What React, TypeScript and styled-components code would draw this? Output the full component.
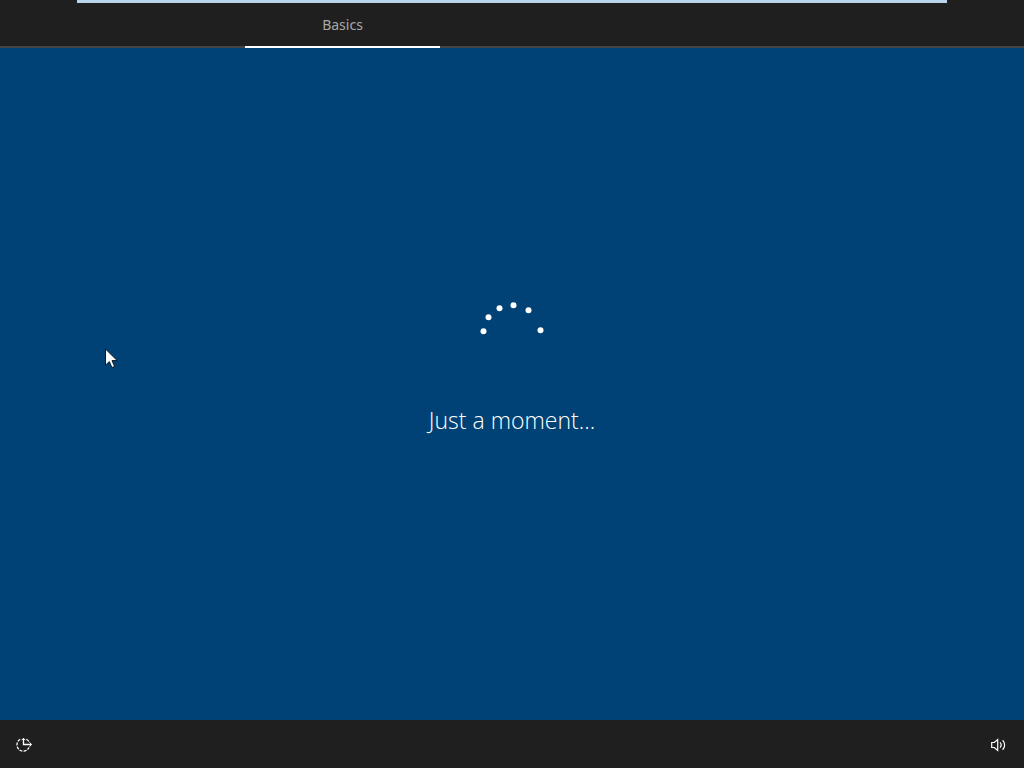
import React from "react";
import styled, { createGlobalStyle } from "styled-components";

const GlobalStyle = createGlobalStyle`
  *, *::before, *::after { box-sizing: border-box; }
  html, body { margin: 0; }
  body {
    background: #004275;
    color: #fff;
    font-family: "Open Sans", "Noto Sans", sans-serif;
    overflow: hidden;
  }
`;

const Screen = styled.div`
  display: flex;
  flex-direction: column;
  min-height: 100vh;
`;

const Header = styled.header`
  display: flex;
  flex-direction: column;
  height: 48px;
  background: #1f1f1f;
`;

const ProgressStrip = styled.div`
  width: 85%;
  height: 3px;
  margin: 0 auto;
  background: #b9d4ea;
`;

const Tabs = styled.nav`
  flex: 1;
  display: grid;
  grid-template-columns: 245fr 195fr 584fr;
  box-shadow: inset 0 -2px #454545;
`;

const Tab = styled.button`
  grid-column: 2;
  padding: 1px 0 0;
  border: 0;
  border-bottom: 2px solid #fff;
  background: transparent;
  color: #a8a8a8;
  font-family: "Noto Sans", "Open Sans", sans-serif;
  font-size: 14px;
  line-height: 20px;
`;

const Main = styled.main`
  flex: 1;
  display: flex;
  flex-direction: column;
  align-items: center;
  justify-content: center;
  gap: 68px;
  padding-bottom: 32px;
`;

const Spinner = styled.svg`
  display: block;
  width: 68px;
  height: 36px;
`;

const Message = styled.h1`
  margin: 0;
  font-size: 23px;
  font-weight: 300;
  line-height: 32px;
`;

const Footer = styled.footer`
  display: flex;
  align-items: center;
  justify-content: space-between;
  height: 48px;
  padding: 2px 16px 0 14px;
  background: #1f1f1f;
`;

const IconButton = styled.button`
  display: flex;
  padding: 0;
  border: 0;
  background: transparent;
  color: #fff;
`;

const Pointer = styled.svg`
  position: absolute;
  left: 105px;
  top: 348px;
  width: 13px;
  height: 21px;
  pointer-events: none;
`;

const dots = [
  [5, 31],
  [10, 17],
  [21, 8],
  [35, 5],
  [50, 10],
  [62, 30],
];

export default function App() {
  return (
    <>
      <GlobalStyle />
      <Screen>
        <Header>
          <ProgressStrip />
          <Tabs aria-label="Setup steps">
            <Tab type="button" aria-current="step">Basics</Tab>
          </Tabs>
        </Header>
        <Main>
          <Spinner viewBox="0 0 68 36" role="img" aria-label="Loading">
            {dots.map(([x, y]) => (
              <circle key={x} cx={x + 0.5} cy={y + 0.3} r="3" fill="#fff" />
            ))}
          </Spinner>
          <Message role="status">Just a moment...</Message>
        </Main>
        <Footer>
          <IconButton type="button" aria-label="Ease of Access">
            <svg width="20" height="18" viewBox="0 0 20 18" fill="none" stroke="currentColor" strokeWidth="1.3">
              <path d="M6.2 3.3A6.3 6.3 0 1 0 15 11.4" strokeDasharray="3 1.2" />
              <path d="M12.4 3.3a6.3 6.3 0 0 1 2.3 2.2" />
              <path d="M9.5 2.4v6.1H17" />
              <path d="M15.4 6.3l2.3 2.2-2.3 2.2M7.7 4.2l1.8-1.9 1.8 1.9" strokeWidth="1" />
            </svg>
          </IconButton>
          <IconButton type="button" aria-label="Volume">
            <svg width="18" height="16" viewBox="0 0 18 16" fill="none" stroke="currentColor" strokeWidth="1.2">
              <path d="M1.7 5.5h2.6l3.4-3v11l-3.4-3H1.7z" />
              <path d="M10 5.4a3.8 3.8 0 0 1 0 5.2M12.6 3.2a6.7 6.7 0 0 1 0 9.6" />
            </svg>
          </IconButton>
        </Footer>
      </Screen>
      <Pointer viewBox="0 0 13 21" aria-hidden="true">
        <path
          d="M.5 1v16.2l3.8-3.6 2.6 6 2.7-1.2L7 12.6h5.2z"
          fill="#fff"
          stroke="#06182a"
          strokeWidth="1"
        />
      </Pointer>
    </>
  );
}
